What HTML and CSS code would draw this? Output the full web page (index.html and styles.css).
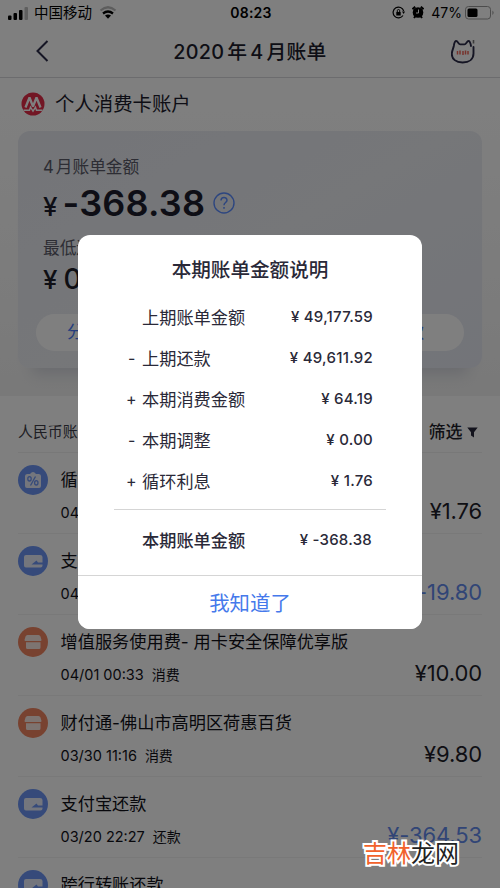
FILE: index.html
```html
<!DOCTYPE html>
<html lang="zh-CN">
<head>
<meta charset="utf-8">
<title>2020年4月账单</title>
<link rel="stylesheet" href="styles.css">
</head>
<body>
<svg width="0" height="0" class="defs" aria-hidden="true">
  <symbol id="wallet" viewBox="0 0 30 30"><circle cx="15" cy="15" r="15" fill="#6c95f5"/><path d="M8 9h14q2.500 0 2.500 2v5.500H20l-1.500-2-5 4h11v1q0 2-2 2H8q-2 0-2-2v-8.500q0-2 2-2z" fill="#e8edfb"/></symbol>
  <symbol id="shop" viewBox="0 0 30 30"><circle cx="15" cy="15" r="15" fill="#f08560"/><path d="M9.500 8h11q1.500 0 2 1.500l1 3.500q0 1-1 1H7.500q-1 0-1-1l1-3.500q.5-1.500 2-1.500zM8 15.300h14.500v5.200q0 1.500-1.500 1.500H9.500q-1.500 0-1.500-1.500z" fill="#fbe9e3"/></symbol>
  <symbol id="percent" viewBox="0 0 30 30"><circle cx="15" cy="15" r="15" fill="#6c95f5"/><path d="M7 11q0-1.500 2-2h3q1.500-2 3-2t3 2h3q2 .5 2 2v10q0 2-2 2H9q-2 0-2-2z" fill="#e8edfb"/><g fill="none" stroke="#6c95f5" stroke-width="1.300"><ellipse cx="11.500" cy="13.800" rx="1.700" ry="2.200"/><ellipse cx="18.300" cy="17.800" rx="1.700" ry="2.200"/><path d="M17.500 11.500l-5 9"/></g></symbol>
</svg>
<main class="app">
  <div class="status">
    <div class="carrier">
      <svg width="20" height="14" viewBox="0 0 20 14"><rect y="9.500" width="3.500" height="4.500" rx="1"/><rect x="5.500" y="7" width="3.500" height="7" rx="1"/><rect x="11" y="4" width="3.500" height="10" rx="1"/><rect x="16.500" y="1" width="3.500" height="13" rx="1" opacity=".25"/></svg>
      <span>中国移动</span>
      <svg class="wifi" width="18" height="13" viewBox="0 0 18 13"><path d="M1.500 4.500Q9-2 16.500 4.500" fill="none" stroke="#bbb" stroke-width="2.200"/><path d="M4 7.500q5-4 10 0" fill="none" stroke="#000" stroke-width="2.300"/><path d="M6 9.500q3-2 6 0L9 12.700z"/></svg>
    </div>
    <b class="time">08:23</b>
    <div class="power">
      <svg width="13" height="13" viewBox="0 0 13 13"><path d="M11 9.500A5.400 5.400 0 1 1 11.700 5" fill="none" stroke="#000" stroke-width="1.200"/><path d="M10 5.500h3L11.700 8z"/><rect x="4.300" y="6" width="4.400" height="3.500"/><path d="M5.300 6V4.700a1.200 1.200 0 0 1 2.400 0V6" fill="none" stroke="#000"/></svg>
      <svg width="12" height="13" viewBox="0 0 12 13"><circle cx="6" cy="6.500" r="5.300"/><path d="M.5 3.200l2.700-2.500M11.500 3.200L8.800.700M2 12l1.500-2M10 12L8.500 10" stroke="#000" stroke-width="2"/><path d="M6.500 3.500V7H4" fill="none" stroke="#fff"/></svg>
      <span>47%</span>
      <svg class="battery" width="29" height="14" viewBox="0 0 29 14"><rect x=".5" y=".5" width="25" height="12.500" rx="3" fill="none" stroke="#999"/><rect x="2.500" y="2.500" width="10" height="8.500" rx="1.500"/><path d="M27.500 4.500q2 2.200 0 4.500z" fill="#888"/></svg>
    </div>
  </div>
  <header class="nav">
    <svg width="13" height="22" viewBox="0 0 13 22"><path d="M11.500 1L1.500 11l10 10" fill="none" stroke="#2b2b48" stroke-width="2"/></svg>
    <h1>2020<i></i>年<i></i>4<i></i>月账单</h1>
    <svg width="24" height="25" viewBox="0 0 24 25"><path d="M22.500 8v6.500c0 5.500-4.200 9-10.900 9S.8 20 .8 15c0-3 1.500-5.500 2-8 .4-2.800.8-5 2.400-5 1.700 0 2.300 3.400 4 3.400h4.300c1.700 0 2.300-3.400 4-3.400 1.500 0 2 2.200 2.500 5" fill="none" stroke="#2b2b48" stroke-width="1.900" stroke-linecap="round"/><path d="M22.500 1v3.500" stroke="#777" stroke-width="1.600"/><path d="M6.500 12v3.500M9 11.500v4M12 12v4M14.500 11.500v4M17 12v3.500" stroke="#ee6758" stroke-width="1.500"/></svg>
  </header>
  <section class="account">
    <div class="owner">
      <svg width="24" height="24" viewBox="0 0 24 24"><circle cx="12" cy="12" r="11.500" fill="#e52d49"/><path d="M4.500 15.500L8.500 5.500l3.500 9 3.500-9 4 10" fill="none" stroke="#fff" stroke-width="2.300" stroke-linejoin="bevel"/><path d="M2.500 18.200h6l1-3 2.500 4 2.500-4 1 3h6" fill="none" stroke="#fff" stroke-width="1.400"/></svg>
      <span>个人消费卡账户</span>
    </div>
    <div class="card">
      <div class="label">4<i></i>月账单金额</div>
      <div class="total"><small>¥</small><strong>-368.38</strong><svg width="22" height="22" viewBox="0 0 22 22"><circle cx="11" cy="11" r="10" fill="none" stroke="#5b8cff" stroke-width="1.400"/><path d="M8 8.500c0-4 6-4 6-.3 0 2.300-3 2.300-3 5M11 15v1.700" fill="none" stroke="#5b8cff" stroke-width="1.500"/></svg></div>
      <div class="label minimum">最低还款额</div>
      <div class="due"><small>¥</small>0.00</div>
      <div class="actions"><span>分期还款</span><span>立即还款</span></div>
    </div>
  </section>
  <section class="list">
    <div class="filter"><span>人民币账单</span><b>筛选 <svg width="11" height="11" viewBox="0 0 11 11"><path d="M.3.500h10.400L7 5.200v5.300l-3-2V5.200z" fill="#26263a"/></svg></b></div>
    <article class="row"><svg class="icon"><use href="#percent"/></svg><div><h2>循环利息</h2><p>04/07<span>利息</span></p></div><data>¥1.76</data></article>
    <article class="row"><svg class="icon"><use href="#wallet"/></svg><div><h2>支付宝还款</h2><p>04/05<span>还款</span></p></div><data class="blue">¥-19.80</data></article>
    <article class="row"><svg class="icon"><use href="#shop"/></svg><div><h2>增值服务使用费- 用卡安全保障优享版</h2><p>04/01 00:33<span>消费</span></p></div><data>¥10.00</data></article>
    <article class="row"><svg class="icon"><use href="#shop"/></svg><div><h2>财付通-佛山市高明区荷惠百货</h2><p>03/30 11:16<span>消费</span></p></div><data>¥9.80</data></article>
    <article class="row"><svg class="icon"><use href="#wallet"/></svg><div><h2>支付宝还款</h2><p>03/20 22:27<span>还款</span></p></div><data class="blue">¥-364.53</data></article>
    <article class="row"><svg class="icon"><use href="#wallet"/></svg><div><h2>跨行转账还款</h2></div></article>
  </section>
</main>
<div class="overlay">
  <section class="dialog">
    <h2>本期账单金额说明</h2>
    <dl>
      <div><i></i><dt>上期账单金额</dt><dd>¥ 49,177.59</dd></div>
      <div><i class="minus">-</i><dt>上期还款</dt><dd>¥ 49,611.92</dd></div>
      <div><i>+</i><dt>本期消费金额</dt><dd>¥ 64.19</dd></div>
      <div><i class="minus">-</i><dt>本期调整</dt><dd>¥ 0.00</dd></div>
      <div><i>+</i><dt>循环利息</dt><dd>¥ 1.76</dd></div>
    </dl>
    <div class="result"><dt>本期账单金额</dt><dd>¥ -368.38</dd></div>
    <button>我知道了</button>
  </section>
</div>
<div class="watermark"><span>吉林</span>龙网</div>
</body>
</html>
```
FILE: styles.css
```css
* { box-sizing: border-box; }
body { margin: 0; height: 888px; overflow: hidden; position: relative; background: #fff; color: #1e1e2a; font-family: Inter, "Noto Sans CJK SC", sans-serif; }
h1, h2, p, dl, dd { margin: 0; font-weight: 400; }
i { font-style: normal; }
.defs { position: absolute; }
.app { height: 888px; overflow: hidden; }
.status { height: 25px; display: grid; grid-template-columns: 1fr auto 1fr; align-items: center; padding: 0 6px 0 8px; color: #000; font-size: 14px; line-height: 25px; }
.carrier, .power { display: flex; align-items: center; }
.carrier { gap: 6px; }
.carrier span { font-size: 14.5px; }
.wifi { margin-left: 1px; }
.time { font-size: 14px; font-weight: 600; letter-spacing: .2px; }
.power { justify-content: flex-end; gap: 7px; }
.battery { margin-left: -4px; }
.nav { height: 53px; border-bottom: 1px solid #d8d8dc; display: flex; align-items: center; justify-content: space-between; padding: 0 25px 0 36px; }
.nav h1 { margin-top: -2px; font-size: 19.8px; font-weight: 500; letter-spacing: .25px; color: #1c1c2c; }
.nav h1 i { display: inline-block; width: 3px; }
.account { height: 318px; padding: 13px 18px 0; background: linear-gradient(#fff 0%, #fcfcfc 30%, #f7f7f7 70%, #f2f2f2 100%); }
.owner { display: flex; align-items: center; height: 26px; gap: 10px; font-size: 19.4px; padding-left: 3px; color: #1c1c2c; }
.owner span { margin-top: -3px; }
.card { margin-top: 14px; height: 237px; border-radius: 12px; background: linear-gradient(150deg, #e8eaf1, #eceef3 50%, #e6e9f2); padding: 23px 18px 0; box-shadow: 0 20px 14px -14px #d3d5dc; }
.label { padding-left: 7px; height: 26px; line-height: 26px; font-size: 16.700px; color: #5a5a68; }
.label i { display: inline-block; width: 2px; }
.total { height: 46px; padding-left: 7px; display: flex; align-items: center; color: #1c1c2c; }
.total small { font-size: 26px; font-weight: 500; margin: 6px 5px 0 0; }
.total strong { font-size: 36px; font-weight: 600; letter-spacing: .2px; }
.total svg { margin-left: 8px; }
.minimum { margin-top: 9px; }
.due { height: 36px; line-height: 36px; padding-left: 7px; font-size: 28px; font-weight: 500; }
.due small { font-size: 26px; margin-right: 6px; }
.actions { display: flex; justify-content: space-between; margin-top: 17px; }
.actions span { width: 202px; height: 37px; line-height: 37px; padding-left: 31px; font-size: 17px; border-radius: 19px; background: #fff; color: #4a7bfa; }
.actions span:last-child { text-align: right; padding: 0 40px 0 0; }
.list { padding: 0 18px; background: #fff; }
.filter { height: 57px; padding-top: 13px; border-bottom: 1px solid #f1f1f1; display: flex; justify-content: space-between; align-items: center; font-size: 14.900px; color: #3c3c48; }
.filter b { font-size: 17px; font-weight: 500; color: #1e1e2a; padding-right: 4px; }
.row { height: 81px; border-bottom: 1px solid #f3f3f3; padding-top: 12px; display: grid; grid-template-columns: 42.5px 1fr auto; align-items: start; white-space: nowrap; }
.icon { width: 30px; height: 30px; }
.row > div { width: 0; }
.row h2 { height: 30px; line-height: 29px; font-size: 17.200px; color: #111118; }
.row p { margin-top: 6px; font-size: 14.500px; line-height: 24px; color: #111118; }
.row p span { margin-left: 8px; font-size: 14px; }
.row data { margin-top: 30px; line-height: 32px; font-size: 22px; letter-spacing: -.1px; color: #1e1e2a; }
.row .blue { color: #638bed; }
.overlay { position: absolute; inset: 0; background: rgba(0,0,0,.5); padding: 235px 78px 0; }
.dialog { height: 394px; border-radius: 12px; background: #fff; overflow: hidden; color: #2a2938; }
.dialog h2 { height: 61px; padding-top: 7px; line-height: 56px; text-align: center; font-size: 19.600px; font-weight: 500; }
.dialog dl div { height: 41px; display: grid; grid-template-columns: 16px 1fr auto; padding: 0 49px 0 48px; align-items: center; }
.dialog dl i { font-size: 16px; }
.dialog .minus { padding-left: 2px; }
.dialog dt { font-size: 17.200px; margin-top: -1px; }
.dialog dd { font-size: 15px; font-weight: 500; letter-spacing: .25px; }
.result { height: 66px; margin: 8px 36px 0; border-top: 1px solid #d5d5d5; padding: 0 14px 6px 28px; display: flex; align-items: center; justify-content: space-between; }
.result dt { font-weight: 500; }
.dialog button { display: block; width: 100%; height: 54px; padding: 0 0 2px; border: 0; border-top: 1px solid #d5d5d5; background: #fff; color: #4579eb; font: 20.400px Inter, "Noto Sans CJK SC", sans-serif; }
.watermark { position: absolute; left: 363px; top: 833px; font: 400 24px/38px "Noto Sans CJK SC", sans-serif; color: #222; -webkit-text-stroke: 4px #fff; paint-order: stroke fill; }
.watermark span { color: #f2622c; }
```
